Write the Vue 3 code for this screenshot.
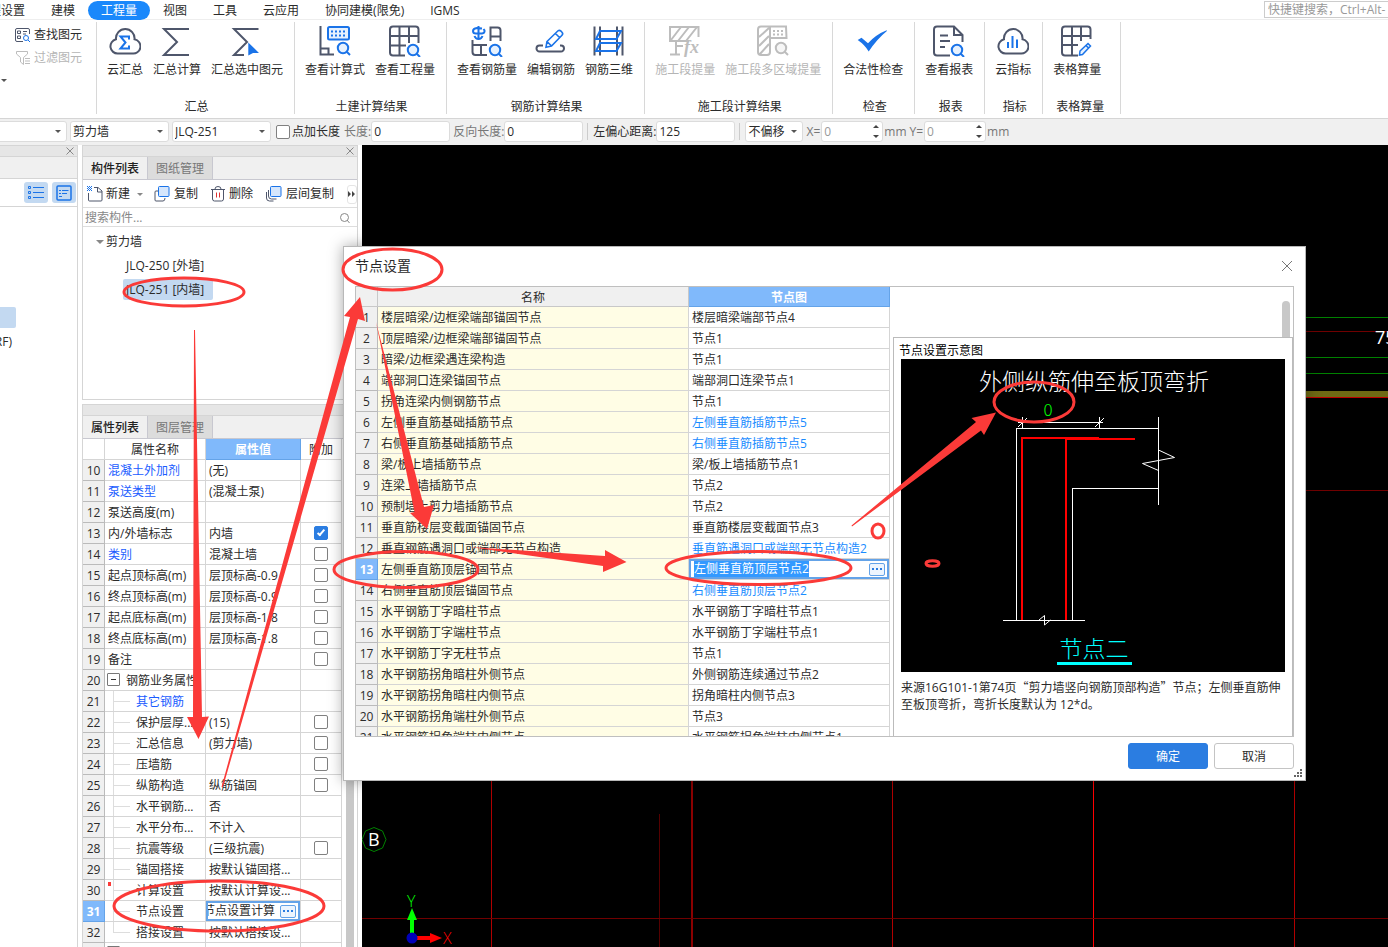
<script setup>
import { ref } from 'vue'

const menus = ['工程设置', '建模', '工程量', '视图', '工具', '云应用', '协同建模(限免)', 'IGMS']
const activeMenu = ref('工程量')

const D = '#4e566b'
const B = '#1a73e8'
const G = '#bdbdbd'
const lens = (x, y, c = B, f = '#e6f1fe') =>
  `<circle cx="${x}" cy="${y}" r="5.2" fill="${f}" stroke="${c}" stroke-width="2"/><path d="M${x + 4} ${y + 4}l3 3" stroke="${c}" stroke-width="2"/>`
const cloud = `<path d="M9 28.5A7.2 7.2 0 0 1 7 14.3A9.3 9.3 0 1 1 25.5 14.3A7.2 7.2 0 0 1 23 28.5Z" stroke="${D}" stroke-width="2"/>`

const icons = {
  cloudSum: cloud + `<path d="M20 14.5v-3h-8.5l5 6-5 6H20v-3" stroke="${B}" stroke-width="2"/>`,
  sum: `<path d="M28 4H3l13 13L3 30h25" stroke="${D}" stroke-width="2"/>`,
  sumPick: `<path d="M27.5 4H3l13 13L3 30h10" stroke="${D}" stroke-width="2"/><path d="M17.3 17.5L28 28h-6l-4.700 2.500z" fill="${B}"/>`,
  formula: `<path d="M1.500 1V29.500H15M1.500 23.500H9.500V29.500" stroke="${D}" stroke-width="2"/><rect x="9" y="2" width="21" height="12.500" rx="1.500" stroke="${B}" stroke-width="2" fill="#e6f1fe"/><path d="M12 6.500h15M12 10.500h15" stroke="${B}" stroke-width="2" stroke-dasharray="2 2"/>` + lens(24, 23),
  grid: `<path d="M16 30.500H4q-3 0-3-3V4.500q0-3 3-3H26.500q3 0 3 3V18M1 11H29.500M1 20.500H17M10.500 2V30M20 2V18" stroke="${D}" stroke-width="2"/>` + lens(24, 25),
  rebarView: `<path d="M11 3.500L6 3Q2 3.500 2 6T5 8.500H11Q14 8 13.500 5.500L12.500 4M7.500 1v13M3.500 11q1 3 4 3t4-3" stroke="${B}" stroke-width="2"/><path d="M19.500 16V2.500H26.500q3 0 3 3V16M19.500 11.500H29.500M1.500 15V27q0 3 3 3H16M1.500 20H16M10 20V30" stroke="${D}" stroke-width="2"/>` + lens(24, 25),
  rebarEdit: `<path d="M8 20.500H4.500a3 3 0 0 0 0 6H26a3 3 0 0 0 0-6H25" stroke="${D}" stroke-width="2"/><path d="M12 16.500L23 5.800q1.500-1 3 .4l1 1q1.400 1.500 0 3L16.500 21l-5.500 1.200zM20.500 8.500l4 4M12.500 17l4 4" stroke="${B}" stroke-width="1.600"/>`,
  rebar3d: `<path d="M1.500 1.500V30.500M7 1.500V30.500M24 1.500V30.500M29.500 1.500V30.500" stroke="${D}" stroke-width="2"/><path d="M7 6H28L23.500 14H3ZM7 18H28L23.500 26H3Z" stroke="${B}" stroke-width="2"/>`,
  stage: `<path d="M1 4.500V16H20M29.500 12V2H1V8M2 15L12 2M9 16L20 2M17 16L28 2M7 17V30M1 29.500H11M8 21H14" stroke="${G}" stroke-width="2"/><text x="15" y="28" font-family="Liberation Serif, serif" font-style="italic" font-weight="bold" font-size="18" fill="${G}">fx</text>`,
  stageMulti: `<path d="M13 14V27q0 3-3 3H4q-3 0-3-3V4.500q0-3 3-3H29L29.500 13H13V2M2 12L12 3M2 21L12 11M3 29L12 19" stroke="${G}" stroke-width="2"/><path d="M16 6h11M16 9.500h11" stroke="${G}" stroke-width="2" stroke-dasharray="2 2"/>` + lens(24, 23, G, '#f6f6f6'),
  check: `<path d="M.700 15L4.500 12.700L11 18.300Q19 9.500 29.700 5.300L29.900 6Q20 14 11.700 26.500Q8 20 .700 15Z" fill="${B}"/>`,
  report: `<path d="M17 30.500H4q-3 0-3-3V4.500q0-3 3-3H21l8.500 8.500V17M21 2v8h8M7 10.500h8M7 16h10M7 22h5" stroke="${D}" stroke-width="2"/>` + lens(24, 25),
  cloudBar: cloud + `<path d="M11 17v6M15.500 11v12M20 14.500v8.500" stroke="${B}" stroke-width="2"/>`,
  gridEdit: `<path d="M17 30.500H4q-3 0-3-3V4.500q0-3 3-3H26.500q3 0 3 3V14M1 11H29.500M1 20H17M11 2V30M20 2V16" stroke="${D}" stroke-width="2"/><path d="M19 26l8-7.500 2.500 2.500-8 8.500-3 .5zM25 20.500l2.500 2.500" stroke="${B}" stroke-width="1.500" fill="#e6f1fe"/>`
}

const groups = [
  { title: '汇总', items: [['cloudSum', '云汇总'], ['sum', '汇总计算'], ['sumPick', '汇总选中图元']] },
  { title: '土建计算结果', items: [['formula', '查看计算式'], ['grid', '查看工程量']] },
  { title: '钢筋计算结果', items: [['rebarView', '查看钢筋量'], ['rebarEdit', '编辑钢筋'], ['rebar3d', '钢筋三维']] },
  { title: '施工段计算结果', off: true, items: [['stage', '施工段提量'], ['stageMulti', '施工段多区域提量']] },
  { title: '检查', items: [['check', '合法性检查']] },
  { title: '报表', items: [['report', '查看报表']] },
  { title: '指标', items: [['cloudBar', '云指标']] },
  { title: '表格算量', wide: true, items: [['gridEdit', '表格算量']] }
]

// check: 0 = none, 1 = empty box, 2 = ticked box
const props = ref([
  { n: 10, name: '混凝土外加剂', value: '(无)', link: true, check: 0 },
  { n: 11, name: '泵送类型', value: '(混凝土泵)', link: true, check: 0 },
  { n: 12, name: '泵送高度(m)', value: '', check: 0 },
  { n: 13, name: '内/外墙标志', value: '内墙', check: 2 },
  { n: 14, name: '类别', value: '混凝土墙', link: true, check: 1 },
  { n: 15, name: '起点顶标高(m)', value: '层顶标高-0.9', check: 1 },
  { n: 16, name: '终点顶标高(m)', value: '层顶标高-0.9', check: 1 },
  { n: 17, name: '起点底标高(m)', value: '层顶标高-1.8', check: 1 },
  { n: 18, name: '终点底标高(m)', value: '层顶标高-1.8', check: 1 },
  { n: 19, name: '备注', value: '', check: 1 },
  { n: 20, name: '钢筋业务属性', value: '', parent: true, check: 0 },
  { n: 21, name: '其它钢筋', value: '', child: true, link: true, check: 0 },
  { n: 22, name: '保护层厚...', value: '(15)', child: true, check: 1 },
  { n: 23, name: '汇总信息', value: '(剪力墙)', child: true, check: 1 },
  { n: 24, name: '压墙筋', value: '', child: true, check: 1 },
  { n: 25, name: '纵筋构造', value: '纵筋锚固', child: true, check: 1 },
  { n: 26, name: '水平钢筋...', value: '否', child: true, check: 0 },
  { n: 27, name: '水平分布...', value: '不计入', child: true, check: 0 },
  { n: 28, name: '抗震等级', value: '(三级抗震)', child: true, check: 1 },
  { n: 29, name: '锚固搭接', value: '按默认锚固搭...', child: true, check: 0 },
  { n: 30, name: '计算设置', value: '按默认计算设...', child: true, check: 0 },
  { n: 31, name: '节点设置', value: '节点设置计算', child: true, edit: true, check: 0 },
  { n: 32, name: '搭接设置', value: '按默认搭接设...', child: true, last: true, check: 0 },
  { n: 33, name: '土建业务属性', value: '', parent: true, check: 0 }
])

const nodes = [
  ['楼层暗梁/边框梁端部锚固节点', '楼层暗梁端部节点4'],
  ['顶层暗梁/边框梁端部锚固节点', '节点1'],
  ['暗梁/边框梁遇连梁构造', '节点1'],
  ['端部洞口连梁锚固节点', '端部洞口连梁节点1'],
  ['拐角连梁内侧钢筋节点', '节点1'],
  ['左侧垂直筋基础插筋节点', '左侧垂直筋插筋节点5', true],
  ['右侧垂直筋基础插筋节点', '右侧垂直筋插筋节点5', true],
  ['梁/板上墙插筋节点', '梁/板上墙插筋节点1'],
  ['连梁上墙插筋节点', '节点2'],
  ['预制墙上剪力墙插筋节点', '节点2'],
  ['垂直筋楼层变截面锚固节点', '垂直筋楼层变截面节点3'],
  ['垂直钢筋遇洞口或端部无节点构造', '垂直筋遇洞口或端部无节点构造2', true],
  ['左侧垂直筋顶层锚固节点', '左侧垂直筋顶层节点2', true],
  ['右侧垂直筋顶层锚固节点', '右侧垂直筋顶层节点2', true],
  ['水平钢筋丁字暗柱节点', '水平钢筋丁字暗柱节点1'],
  ['水平钢筋丁字端柱节点', '水平钢筋丁字端柱节点1'],
  ['水平钢筋丁字无柱节点', '节点1'],
  ['水平钢筋拐角暗柱外侧节点', '外侧钢筋连续通过节点2'],
  ['水平钢筋拐角暗柱内侧节点', '拐角暗柱内侧节点3'],
  ['水平钢筋拐角端柱外侧节点', '节点3'],
  ['水平钢筋拐角端柱内侧节点', '水平钢筋拐角端柱内侧节点1']
]
const selectedNode = ref(13)
</script>

<template>
  <div class="app">
    <nav class="menu">
      <button v-for="m in menus" :key="m" type="button" class="menu-item" :class="{ on: m === activeMenu }" @click="activeMenu = m">{{ m }}</button>
      <input class="hotkey" type="text" aria-label="快捷键搜索" placeholder="快捷键搜索，Ctrl+Alt-" />
    </nav>

    <header class="ribbon">
      <section class="finder">
        <button type="button">
          <svg width="16" height="16" viewBox="0 0 16 16" fill="none" stroke="#4e566b"><path d="M8 14.500H2q-1.500 0-1.500-1.500V3Q.5 1.500 2 1.500H13q1.500 0 1.500 1.500V7M2.500 4h3v2.500h-3zM2.500 9h3v2.500h-3zM8 4.500h4M8 7h3" /><circle cx="11" cy="11" r="2.500" stroke="#1a73e8" /><path d="M13 13l2 2" stroke="#1a73e8" /></svg>
          查找图元
        </button>
        <button type="button" disabled>
          <svg width="16" height="16" viewBox="0 0 16 16" fill="none" stroke="#bdbdbd"><path d="M1.500 1.500H12.500V4L8.500 7.500V14.500L5.500 12V7.500L1.500 4ZM10 8.500h5M10 11h5M10 13.500h5" /></svg>
          过滤图元
        </button>
        <i class="caret"></i>
      </section>
      <section v-for="g in groups" :key="g.title" class="group" :class="{ wide: g.wide }">
        <div class="tools">
          <button v-for="[icon, label] in g.items" :key="label" type="button" :disabled="g.off">
            <svg width="32" height="32" viewBox="0 0 32 32" fill="none" v-html="icons[icon]"></svg>
            <span>{{ label }}</span>
          </button>
        </div>
        <h2>{{ g.title }}</h2>
      </section>
    </header>

    <form class="options" @submit.prevent>
      <span class="sel first"><select aria-label="楼层"><option></option></select><i class="caret"></i></span>
      <span class="sel"><select aria-label="构件类型"><option>剪力墙</option></select><i class="caret"></i></span>
      <span class="sel"><select aria-label="构件"><option>JLQ-251</option></select><i class="caret"></i></span>
      <label class="tick"><input type="checkbox" class="box" />点加长度</label>
      <label class="dim">长度:<input type="text" value="0" /></label>
      <label class="dim">反向长度:<input type="text" value="0" /></label>
      <i class="sep"></i>
      <label>左偏心距离:<input type="text" value="125" /></label>
      <i class="sep"></i>
      <span class="sel small"><select aria-label="偏移方式"><option>不偏移</option></select><i class="caret"></i></span>
      <label class="dim spin">X=<span><input type="text" value="0" disabled /><i class="up"></i><i class="down"></i></span>mm</label>
      <label class="dim spin">Y=<span><input type="text" value="0" disabled /><i class="up"></i><i class="down"></i></span>mm</label>
    </form>

    <main class="work">
      <aside class="floors">
        <div class="strip"><button type="button" aria-label="关闭"><svg width="8" height="8" viewBox="0 0 8 8" stroke="#888"><path d="M.5 .5l7 7M7.500 .5l-7 7" /></svg></button></div>
        <div class="blank"></div>
        <div class="views">
          <button type="button" aria-label="列表视图">
            <svg width="18" height="16" viewBox="0 0 18 16" fill="none" stroke="#1a73e8"><path d="M1.500 1.500h2v2h-2zM1.500 6.500h2v2h-2zM1.500 11.500h2v2h-2zM6 2.500h11M6 7.500h11M6 12.500h11" /></svg>
          </button>
          <button type="button" aria-label="详情视图">
            <svg width="16" height="16" viewBox="0 0 16 16" fill="none" stroke="#1a73e8"><rect x="1" y="1" width="14" height="14" rx="1" stroke-width="1.500" /><path d="M3 5.500h2M6 5.500h6.500M3 8.500h2M6 8.500h5M3 11.500h3" /></svg>
          </button>
        </div>
        <div class="picked"></div>
        <div class="floor"><span>屋面层(RF)</span></div>
      </aside>

      <div class="panels">
        <section class="comp">
          <div class="strip"><button type="button" aria-label="关闭"><svg width="8" height="8" viewBox="0 0 8 8" stroke="#888"><path d="M.5 .5l7 7M7.500 .5l-7 7" /></svg></button></div>
          <div class="tabs"><button type="button" class="on">构件列表</button><button type="button">图纸管理</button></div>
          <div class="bar">
            <button type="button" class="new">
              <svg width="16" height="16" viewBox="0 0 16 16" fill="none" stroke="#4e566b"><path d="M1.500 7V14q0 1 1 1H14q1 0 1-1V5L11 1.500H7M10.500 2v4H15" /><path d="M0 .5h5M0 2.500h5M0 4.500h5" stroke="#1a73e8" stroke-dasharray="1 1" /><path d="M1 1.500h4M1 3.500h4" stroke="#1a73e8" stroke-dasharray="1 1" /></svg>
              新建<i class="caret"></i>
            </button>
            <button type="button">
              <svg width="16" height="16" viewBox="0 0 16 16" fill="none"><path d="M4 5H2q-1 0-1 1v8q0 1 1 1h7q2 0 2-3" stroke="#4e566b" /><rect x="4.500" y=".5" width="10.500" height="10" rx="1" fill="#d5e6fc" stroke="#1a73e8" /></svg>
              复制
            </button>
            <button type="button">
              <svg width="14" height="16" viewBox="0 0 14 16" fill="none" stroke="#4e566b"><path d="M0 3.500h14M4 3Q4 .5 7 .5T10 3M1.500 4V13q0 2 2 2h7q2 0 2-2V4" /><path d="M5.500 6.500v5M8.500 6.500v5" stroke="#d33" /></svg>
              删除
            </button>
            <button type="button">
              <svg width="16" height="16" viewBox="0 0 16 16" fill="none"><path d="M.5 6v6q0 3 3 3h4M2.500 4v6q0 3 3 3h5" stroke="#4e566b" /><rect x="4.500" y=".5" width="10.500" height="10" rx="1" fill="#d5e6fc" stroke="#1a73e8" /></svg>
              层间复制
            </button>
            <button type="button" class="more" aria-label="更多"><svg width="8" height="6" viewBox="0 0 8 6"><path d="M0 0l3 3-3 3zM4 0l3 3-3 3z" fill="#444" /></svg></button>
          </div>
          <label class="search">
            <input type="text" aria-label="搜索构件" placeholder="搜索构件..." />
            <svg width="12" height="12" viewBox="0 0 12 12" fill="none" stroke="#888"><circle cx="5.500" cy="5.500" r="4" /><path d="M8 8l2.500 3" /></svg>
          </label>
          <ul class="tree">
            <li class="root"><i class="caret"></i>剪力墙</li>
            <li>JLQ-250 [外墙]</li>
            <li><span>JLQ-251 [内墙]</span></li>
          </ul>
        </section>

        <section class="attr">
          <div class="strip"></div>
          <div class="tabs"><button type="button" class="on">属性列表</button><button type="button">图层管理</button></div>
          <div class="scroller">
            <table>
              <colgroup><col class="c1" /><col class="c2" /><col class="c3" /><col class="c4" /></colgroup>
              <thead><tr><th></th><th>属性名称</th><th class="hot">属性值</th><th>附加</th></tr></thead>
              <tbody>
                <tr v-for="p in props" :key="p.n">
                  <th scope="row" :class="{ hot: p.edit }">{{ p.n }}</th>
                  <td :class="{ link: p.link, child: p.child, parent: p.parent, last: p.last }"><button v-if="p.parent" type="button" class="fold" aria-label="折叠"></button>{{ p.name }}</td>
                  <td :class="{ editing: p.edit }">
                    <div v-if="p.edit" class="editor"><input type="text" aria-label="节点设置" :value="p.value" /><button type="button" class="dots" aria-label="选择节点设置"></button></div>
                    <template v-else>{{ p.value }}</template>
                  </td>
                  <td class="mid"><input v-if="p.check" type="checkbox" class="box" :aria-label="p.name + '附加'" :checked="p.check === 2" /></td>
                </tr>
              </tbody>
            </table>
            <i class="thumb"></i>
          </div>
        </section>
      </div>

      <section class="canvas">
        <svg width="100%" height="100%" shape-rendering="crispEdges">
          <g stroke="#b00000">
            <path d="M129.500 600V802M530.500 600V802M932.500 600V802" />
            <path d="M330 600V802" stroke="#8b0000" stroke-width="2" />
            <path d="M731.500 600V802" stroke="#f00" />
            <path d="M297.500 669V802" stroke="#500" />
            <path d="M0 773.500H1026M900 186.500H1026M900 345.500H1026" stroke="#700000" />
          </g>
          <path d="M900 172.500H1026M900 212.500H1026M900 228.500H1026" stroke="#008000" />
          <rect x="900" y="246" width="126" height="6" fill="#6f6a14" />
          <path d="M900 252.500H1026" stroke="#c00000" />
          <g shape-rendering="auto">
            <path d="M12 682.500l8.500 3.500 3.500 8.500-3.500 8.500-8.500 3.500-8.500-3.500L0 694.500l3.500-8.500z" fill="none" stroke="#008000" />
            <path d="M50 793V775" stroke="#0f0" stroke-width="4" /><path d="M50 763l5 12H45z" fill="#0f0" />
            <path d="M52 793H69" stroke="#f00" stroke-width="4" /><path d="M80 793l-12-5v10z" fill="#f00" />
            <circle cx="50" cy="793" r="5.500" fill="#0000b8" />
            <text x="6" y="701" class="cad" fill="#fff">B</text>
            <text x="45" y="762" class="axis" fill="#0f0">Y</text>
            <text x="81" y="799" class="axis" fill="#f00">X</text>
            <text x="1013" y="199" class="cad" fill="#fff">750</text>
          </g>
        </svg>
      </section>
    </main>

    <section class="dialog" role="dialog" aria-label="节点设置">
      <div class="title"><h1>节点设置</h1><button type="button" aria-label="关闭"><svg width="12" height="12" viewBox="0 0 12 12" stroke="#777"><path d="M1 1l10 10M11 1L1 11" /></svg></button></div>
      <div class="body">
        <table>
          <colgroup><col class="d1" /><col class="d2" /><col class="d3" /></colgroup>
          <thead><tr><th></th><th>名称</th><th class="hot">节点图</th></tr></thead>
          <tbody>
            <tr v-for="([name, value, blue], i) in nodes" :key="name" @click="selectedNode = i + 1">
              <th scope="row" :class="{ hot: i + 1 === selectedNode }">{{ i + 1 }}</th>
              <td class="name">{{ name }}</td>
              <td :class="{ blue, editing: i + 1 === selectedNode }">
                <div v-if="i + 1 === selectedNode" class="editor"><mark>{{ value }}</mark><button type="button" class="dots" aria-label="选择节点图"></button></div>
                <template v-else>{{ value }}</template>
              </td>
            </tr>
          </tbody>
        </table>
        <div class="side">
          <div class="track"><i></i></div>
          <figure>
            <h2>节点设置示意图</h2>
            <svg viewBox="0 0 384 313">
              <rect width="384" height="313" fill="#000" />
              <g fill="none" stroke="#fff" shape-rendering="crispEdges">
                <path d="M115.500 262V69.500H257.500M257.500 58V146M257.500 129.500H171.500V262M102 261.500H184M117 63.500H202M121.500 58V69M198.500 58V69" />
              </g>
              <path d="M117 68l9-9M194 68l9-9M257.500 91l16 7.500-32 6 16 7M138 261l5.500-4.500v9.500l6-5" fill="none" stroke="#fff" />
              <path d="M121 261V79H198M165 261V80H234" fill="none" stroke="#f00" stroke-width="2" />
              <text x="193" y="31" text-anchor="middle" class="draw" fill="#fff">外侧纵筋伸至板顶弯折</text>
              <text x="147" y="57" text-anchor="middle" class="zero" fill="#0f0">0</text>
              <text x="193" y="298" text-anchor="middle" class="draw" fill="#0ff">节点二</text>
              <rect x="156" y="303" width="75" height="3" fill="#0ff" />
            </svg>
            <figcaption>来源16G101-1第74页<q>剪力墙竖向钢筋顶部构造</q>节点；左侧垂直筋伸至板顶弯折，弯折长度默认为 12*d。</figcaption>
          </figure>
        </div>
      </div>
      <footer><button type="button" class="ok">确定</button><button type="button">取消</button></footer>
      <svg class="grip" width="9" height="9" viewBox="0 0 9 9" fill="#666"><path d="M6 0h2v2H6zM6 3h2v2H6zM3 3h2v2H3zM0 6h2v2H0zM3 6h2v2H3zM6 6h2v2H6z" /></svg>
    </section>

    <svg class="marks" aria-hidden="true">
      <g fill="none" stroke="#fb3a38" stroke-width="3">
        <ellipse cx="184" cy="292" rx="60" ry="14" />
        <ellipse cx="392.500" cy="269.500" rx="49.500" ry="20.500" />
        <ellipse cx="406" cy="569.500" rx="72" ry="18" />
        <ellipse cx="758.500" cy="568" rx="92.500" ry="16.500" />
        <ellipse cx="1034" cy="402" rx="40" ry="20" />
        <ellipse cx="219" cy="906" rx="105" ry="25" />
        <ellipse cx="878" cy="531" rx="6" ry="7" />
        <ellipse cx="932.500" cy="563.500" rx="6.500" ry="2.700" />
      </g>
      <g fill="#fb3a38">
        <path d="M194 330h1L202 717l7-.5-10.500 22.500L187 717h6z" />
        <path d="M221.500 787L350 317l-6-1L360 297l5 24-7-2L223 787z" />
        <path d="M376 322L424 507l10-2-7 24-17-16 4.500-1z" />
        <path d="M470 547L605 556v-6l21.500 12L603 572v-6z" />
        <path d="M851.500 525.500L976 422l-4.500-4 24.500-5.500L984 435l-3-4.500L852 526.500z" />
        <rect x="108" y="882" width="3" height="4" />
      </g>
    </svg>
  </div>
</template>

<style>
body { margin: 0; overflow: hidden; }
</style>

<style scoped>
.app { position: relative; display: flex; flex-direction: column; height: 100vh; overflow: hidden; background: #fff; color: #2b2b2b; font: 12px/16px "Open Sans", "Noto Sans CJK SC", sans-serif; }
.app *, .app *::before, .app *::after { box-sizing: border-box; }
button, input, select { font: inherit; color: inherit; }
button { padding: 0; border: 0; background: none; white-space: nowrap; }
h1, h2, ul, figure { margin: 0; padding: 0; font-size: 12px; font-weight: 400; }
svg { display: block; flex: none; }
.caret { display: block; border: 3px solid transparent; border-top-color: #555; border-bottom: 0; }

.menu { display: flex; flex: none; height: 20px; padding-top: 1px; border-bottom: 1px solid #eee; }
.menu-item { flex: none; height: 19px; padding: 0 13px; }
.menu-item:first-child { margin-left: -36px; }
.menu-item.on { border-radius: 10px; background: #1a88fb; color: #fff; }
.hotkey { flex: none; width: 132px; height: 17px; margin: 0 -8px 0 auto; padding: 0 3px; border: 1px solid #ccc; outline: 0; background: #fff; }
.hotkey::placeholder { color: #999; opacity: 1; }

.ribbon { display: flex; flex: none; height: 99px; padding: 2px 0 4px; border-bottom: 1px solid #d5d5d5; }
.finder { flex: none; width: 97px; padding: 1px 0 0 15px; border-right: 1px solid #d8d8d8; }
.finder button { display: flex; align-items: center; gap: 3px; height: 23px; }
.finder button:disabled { color: #b5b5b5; }
.finder .caret { width: 6px; margin: 10px 0 0 -14px; }
.group { display: flex; flex-direction: column; justify-content: space-between; flex: none; padding: 3px 11px 0 10px; border-right: 1px solid #d8d8d8; }
.group.wide { padding-right: 16px; }
.tools { display: flex; gap: 10px; }
.tools button { display: flex; flex-direction: column; align-items: center; gap: 5px; }
.tools button:disabled { color: #b5b5b5; }
.group h2 { padding-left: 3px; line-height: 14px; text-align: center; }

.options { display: flex; flex: none; align-items: center; height: 26px; padding-bottom: 1px; background: #f0f0f0; }
.options label { display: flex; align-items: center; flex: none; white-space: nowrap; }
.options input[type=text], .options select { height: 21px; margin: 0; padding: 0 2px; border: 1px solid #dcdcdc; border-radius: 3px; outline: 0; background: #fff; color: #2b2b2b; }
.options input[type=text] { width: 79px; }
.options select { width: 100%; appearance: none; }
.sel { position: relative; flex: none; width: 99px; margin-right: 3px; }
.sel .caret { position: absolute; right: 6px; top: 9px; }
.sel.first { width: 75px; margin-left: -8px; }
.sel.small { width: 58px; }
.options .tick { gap: 2px; margin: 0 4px 0 2px; }
.dim { color: #777; margin-right: 3px; }
.sep { width: 1px; height: 17px; margin: 0 5px 0 4px; background: #ccc; }
.dim + .sep { margin-left: 1px; }
.spin span { position: relative; display: block; margin: 0 1px; }
.options .spin input[type=text] { display: block; width: 62px; color: #999; }
.up, .down { position: absolute; right: 4px; border: 3px solid transparent; }
.up { top: 4px; border-top: 0; border-bottom-color: #444; }
.down { bottom: 4px; border-bottom: 0; border-top-color: #444; }

.box { appearance: none; position: relative; flex: none; width: 14px; height: 14px; margin: 0; border: 1px solid #808080; border-radius: 2px; background: #fff; }
.box:checked { border-color: #2b7de1; background: #2b7de1; }
.box:checked::after { content: ""; position: absolute; left: 4px; top: 1px; width: 4px; height: 8px; border: solid #fff; border-width: 0 2px 2px 0; transform: rotate(40deg); }

.work { display: flex; flex: 1; min-height: 0; }
.strip { display: flex; justify-content: flex-end; align-items: center; flex: none; height: 12px; padding-right: 3px; border: 1px solid #d5d5d5; border-width: 1px 0; background: #e6e6e6; }
.floors { flex: none; width: 78px; border-right: 1px solid #d5d5d5; overflow: hidden; }
.blank { height: 22px; border-bottom: 1px solid #d5d5d5; background: #f0f0f0; }
.views { display: flex; justify-content: flex-end; gap: 4px; height: 28px; padding: 3px 1px; border-bottom: 1px solid #d5d5d5; }
.views button { display: flex; align-items: center; justify-content: center; width: 24px; border-radius: 3px; background: #c3d9f1; }
.picked { width: 16px; height: 21px; margin-top: 100px; border-radius: 0 2px 2px 0; background: #c3d9f1; }
.floor { display: flex; justify-content: flex-end; width: 12px; margin-top: 6px; white-space: nowrap; }

.panels { display: flex; flex-direction: column; flex: none; gap: 4px; width: 276px; margin: 0 4px; }
.panels > section { display: flex; flex-direction: column; border: 1px solid #d5d5d5; border-width: 0 1px; }
.comp { height: 255px; }
.panels > .comp { border-bottom-width: 1px; }
.tabs { display: flex; flex: none; height: 23px; border-bottom: 1px solid #c8c8d0; background: #f0f0f0; }
.tabs button { width: 65px; padding-top: 2px; border-right: 1px solid #c8c8d0; background: #dcdcdc; color: #777; }
.tabs .on { background: #f0f0f0; color: #222; font-weight: 500; }
.bar { display: flex; align-items: center; flex: none; height: 28px; padding: 1px 1px 0 4px; border-bottom: 1px solid #ddd; }
.bar button { display: flex; align-items: center; gap: 4px; margin-right: 13px; }
.bar button.new { gap: 3px; margin-right: 11px; }
.bar .caret { margin-left: 4px; border-top-color: #888; }
.bar button.more { justify-content: center; width: 11px; height: 19px; margin: 0 0 0 auto; border: 1px solid #e5e5e5; border-radius: 3px; }
.search { display: flex; align-items: center; flex: none; height: 19px; padding: 1px 6px 0 2px; border-bottom: 1px solid #ddd; }
.search input { flex: 1; min-width: 0; height: 16px; padding: 0; border: 0; outline: 0; }
.search input::placeholder { color: #888; opacity: 1; }
.tree { padding-top: 3px; list-style: none; }
.tree li { height: 24px; padding-left: 43px; line-height: 24px; }
.tree .root { display: flex; align-items: center; gap: 2px; padding-left: 13px; }
.tree .caret { border-width: 4px; border-bottom: 0; border-top-color: #888; }
.tree span { display: inline-block; width: 90px; height: 21px; margin-left: -3px; padding: 0 3px; border-radius: 2px; background: #c3d9f1; line-height: 21px; }

.attr { flex: 1; min-height: 0; overflow: hidden; }
.scroller { display: flex; justify-content: space-between; flex: 1; min-height: 0; overflow: hidden; }
.thumb { width: 8px; margin-right: 3px; background: #c8c8c8; }
table { flex: none; align-self: flex-start; table-layout: fixed; border-spacing: 0; border-collapse: separate; }
.attr table { width: 259px; }
.c1 { width: 22px; } .c2 { width: 101px; } .c3 { width: 95px; } .c4 { width: 41px; }
th, td { height: 21px; padding: 2px 3px 0; border: solid #d5d5d5; border-width: 0 1px 1px 0; font-weight: 400; line-height: 16px; text-align: left; white-space: nowrap; overflow: hidden; }
th { padding: 2px 0 0; text-align: center; }
tbody th { border-color: #bbb; background: #f0f0f0; }
th.hot { border-color: #64a3e8; background: #80b9fb; color: #fff; font-weight: 700; }
.link { color: #1a5cff; }
td.parent, td.child { position: relative; padding-left: 31px; }
td.parent { padding-left: 21px; }
.fold { position: absolute; left: 2px; top: 3px; width: 13px; height: 13px; border: 1px solid #777; border-radius: 1px; }
.fold::after { content: ""; display: block; width: 5px; height: 1px; margin: auto; background: #333; }
td.child::before { content: ""; position: absolute; left: 8px; top: 0; width: 1px; height: 21px; background: #ddd; }
td.last::before { height: 10px; }
td.child::after { content: ""; position: absolute; left: 8px; top: 10px; width: 17px; height: 1px; background: #ddd; }
td.mid { padding-top: 0; }
.mid .box { display: block; margin: 0 auto; }
td.editing { padding: 0; }
.editor { display: flex; align-items: center; justify-content: space-between; height: 20px; padding-right: 2px; border: 2px solid #64a3e8; }
.editor input { flex: 1; min-width: 0; height: 16px; padding: 0; border: 0; outline: 0; text-indent: -5px; }
.dots { display: flex; align-items: center; justify-content: center; flex: none; width: 16px; height: 13px; border: 1px solid #64a3e8; border-radius: 2px; background: #edf5fe; }
.dots::after { content: ""; width: 2px; height: 2px; background: #2b7de1; box-shadow: -4px 0 #2b7de1, 4px 0 #2b7de1; }

.canvas { flex: 1; min-width: 0; background: #000; overflow: hidden; }
.cad { font: 18px "Open Sans", sans-serif; }
.axis { font: 300 16px "Open Sans", sans-serif; }

.dialog { position: absolute; left: 343px; top: 246px; display: flex; flex-direction: column; width: 963px; height: 535px; padding: 0 11px 11px; border: 1px solid #b8b8b8; background: #fff; box-shadow: 0 0 14px rgba(0, 0, 0, .35); }
.title { display: flex; align-items: center; justify-content: space-between; height: 39px; padding-bottom: 2px; }
.title h1 { font-size: 14px; }
.title button { margin-right: 1px; }
.body { display: flex; flex: 1; min-height: 0; border: 1px solid #bfbfbf; overflow: hidden; }
.body table { width: 534px; }
.d1 { width: 22px; } .d2 { width: 311px; } .d3 { width: 201px; }
.body thead th { height: 20px; border-color: #c8c8c8; background: #f0f0f0; }
.body thead th.hot { border-color: #64a3e8; background: #80b9fb; }
.body .name { background: #fffde5; }
.body .blue { color: #1a8cff; }
.editor mark { margin-left: 3px; background: #3399ff; color: #fff; }
.side { display: flex; flex-direction: column; flex: 1; min-width: 0; margin-left: 3px; }
.track { display: flex; justify-content: flex-end; height: 50px; padding: 14px 3px 0 0; }
.track i { width: 8px; border-radius: 4px 4px 0 0; background: #c8c8c8; }
figure { flex: 1; padding: 5px 7px; border: 1px solid #bbb; border-bottom: 0; }
figure h2 { margin-left: -2px; color: #000; }
figure svg { width: 100%; }
figcaption { margin-top: 6px; line-height: 17px; }
figcaption q::before, figcaption q::after { font-family: "Noto Sans CJK SC", sans-serif; }
figcaption q::before { content: "“"; }
figcaption q::after { content: "”"; }
.draw { font: 300 23px "Noto Sans CJK SC", sans-serif; }
.zero { font: 300 17px "Noto Sans CJK SC", sans-serif; }
.dialog footer { display: flex; justify-content: flex-end; gap: 6px; margin-top: 6px; }
.dialog footer button { width: 80px; height: 26px; padding-top: 2px; border: 1px solid #c4c4c4; border-radius: 3px; background: #fff; }
.dialog footer .ok { border-color: #2b7de1; background: #2b7de1; color: #fff; }
.grip { position: absolute; right: 2px; bottom: 2px; }

.marks { position: absolute; left: 0; top: 0; width: 100%; height: 100%; pointer-events: none; }
</style>
